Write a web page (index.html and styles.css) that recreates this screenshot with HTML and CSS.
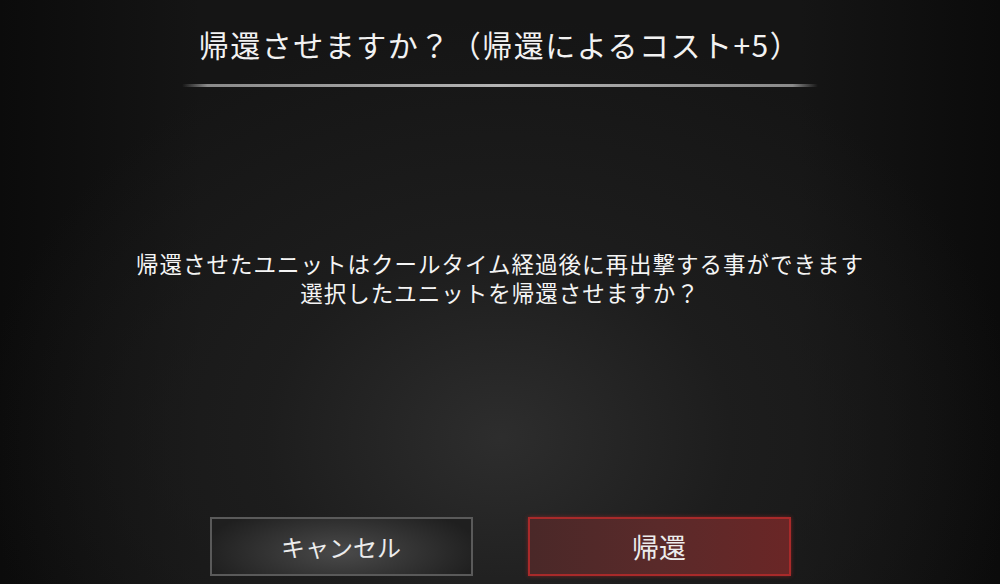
FILE: index.html
```html
<!DOCTYPE html>
<html lang="ja">
<head>
    <meta charset="UTF-8">
    <meta name="viewport" content="width=device-width, initial-scale=1.0">
    <title>帰還確認</title>
    <link rel="stylesheet" href="styles.css">
</head>
<body>

    <div class="dialog">
        <header class="dialog-head">
            <h1 class="dialog-title">帰還させますか？（帰還によるコスト+5）</h1>
            <div class="dialog-rule"></div>
        </header>

        <div class="dialog-body">
            <p>帰還させたユニットはクールタイム経過後に再出撃する事ができます</p>
            <p>選択したユニットを帰還させますか？</p>
        </div>

        <div class="dialog-actions">
            <button type="button" class="btn btn-cancel">キャンセル</button>
            <button type="button" class="btn btn-confirm">帰還</button>
        </div>
    </div>

</body>
</html>
```

FILE: styles.css
```css
html, body {
    margin: 0;
    padding: 0;
    height: 100%;
}
body {
    font-family: "Noto Sans CJK JP", "Noto Sans", sans-serif;
    color: #f0f0f0;
    background-color: #0e0e0e;
    overflow: hidden;
}
.dialog {
    height: 584px;
    display: flex;
    flex-direction: column;
    align-items: center;
    background:
        radial-gradient(ellipse 520px 420px at 50% 75%, rgba(48, 48, 48, 0.9) 0%, rgba(34, 34, 34, 0.6) 45%, rgba(14, 14, 14, 0) 100%),
        linear-gradient(to right, #0b0b0b 0%, #151515 20%, #151515 80%, #0b0b0b 100%);
}
.dialog-head {
    width: 636px;
    padding-top: 22px;
    display: flex;
    flex-direction: column;
    align-items: center;
}
.dialog-title {
    margin: 0;
    font-size: 30px;
    font-weight: normal;
    line-height: 44px;
    letter-spacing: 1.5px;
    color: #f2f2f2;
}
.dialog-rule {
    width: 100%;
    height: 3px;
    margin-top: 18px;
    border-radius: 2px;
    background: linear-gradient(to right, rgba(120, 120, 120, 0) 0%, #8a8a8a 4%, #b4b4b4 50%, #8a8a8a 96%, rgba(120, 120, 120, 0) 100%);
}
.dialog-body {
    margin-top: 162px;
    text-align: center;
}
.dialog-body p {
    margin: 0;
    font-size: 22.5px;
    line-height: 29px;
    letter-spacing: 1px;
    color: #f4f4f4;
}
.dialog-actions {
    margin-top: auto;
    margin-bottom: 8px;
    display: flex;
    gap: 55px;
}
.btn {
    width: 263px;
    height: 59px;
    font-family: inherit;
    font-size: 24px;
    color: #ececec;
    cursor: pointer;
    box-sizing: border-box;
}
.btn-cancel {
    border: 2px solid #5a5a5a;
    background: radial-gradient(ellipse 140px 50px at 50% 60%, #4a4a4a 0%, #2c2c2c 70%, #1f1f1f 100%);
}
.btn-confirm {
    border: 2px solid #a82a2a;
    box-shadow: 0 0 4px rgba(200, 40, 40, 0.5);
    background: linear-gradient(to right, #4a2828 0%, #5a2a2a 50%, #6a2626 100%);
    font-size: 27px;
}
.btn:hover {
    opacity: 0.9;
}
```
